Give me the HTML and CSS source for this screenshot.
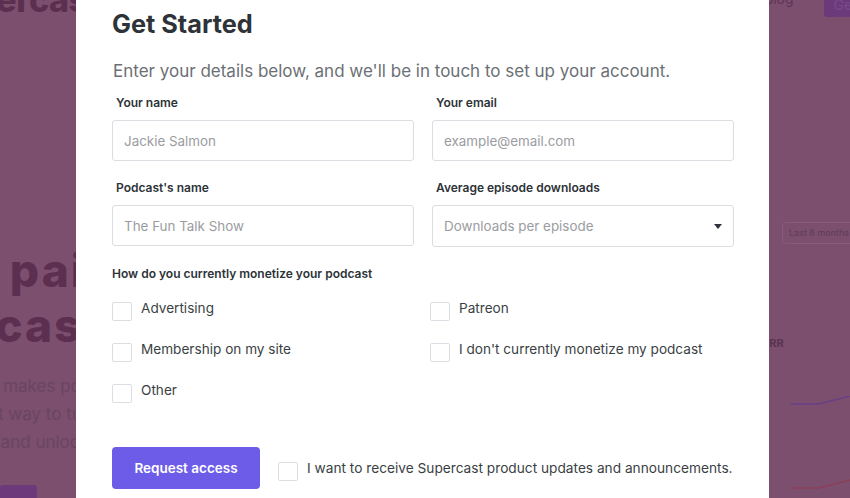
FILE: index.html
```html
<!DOCTYPE html>
<html>
<head>
<meta charset="utf-8">
<link rel="stylesheet" href="styles.css">
</head>
<body>
<div class="page">
  <aside class="bg-left">
    <div class="bg-logo">Supercast</div>
    <h2 class="bg-hero"><span class="h1">Get paid</span><span class="h2">podcasts</span></h2>
    <p class="bg-copy"><span class="c1">Supercast makes pods</span><span class="c2">the easiest way to turn</span><span class="c3">listeners and unlock</span></p>
    <div class="bg-btn"></div>
  </aside>
  <main class="modal">
    <h1 class="title">Get Started</h1>
    <p class="intro">Enter your details below, and we'll be in touch to set up your account.</p>
    <div class="grid">
      <div class="field">
        <label class="label">Your name</label>
        <div class="input">Jackie Salmon</div>
      </div>
      <div class="field">
        <label class="label">Your email</label>
        <div class="input">example@email.com</div>
      </div>
      <div class="field">
        <label class="label">Podcast's name</label>
        <div class="input">The Fun Talk Show</div>
      </div>
      <div class="field">
        <label class="label">Average episode downloads</label>
        <div class="input select">Downloads per episode<span class="caret"></span></div>
      </div>
    </div>
    <div class="label q">How do you currently monetize your podcast</div>
    <div class="checks">
      <div class="check"><span class="box"></span>Advertising</div>
      <div class="check"><span class="box"></span>Patreon</div>
      <div class="check"><span class="box"></span>Membership on my site</div>
      <div class="check"><span class="box"></span>I don't currently monetize my podcast</div>
      <div class="check"><span class="box"></span>Other</div>
    </div>
    <div class="actions">
      <button class="btn">Request access</button>
      <div class="check"><span class="box"></span>I want to receive Supercast product updates and announcements.</div>
    </div>
  </main>
  <aside class="bg-right">
    <div class="bg-nav"><span class="bg-blog">Blog</span><span class="bg-nbtn">Get</span></div>
    <div class="bg-pill">Last 6 months</div>
    <div class="bg-rr">MRR</div>
    <svg class="bg-chart" width="81" height="100" viewBox="0 0 81 100">
      <path d="M22 8 L50 8 L81 0" fill="none" stroke="#6a3f86" stroke-width="1.5"/>
      <path d="M22 92 L50 92 L81 84" fill="none" stroke="#8a4058" stroke-width="1.5"/>
    </svg>
  </aside>
</div>
</body>
</html>
```
FILE: styles.css
```css
* { box-sizing: border-box; }
html, body { margin: 0; padding: 0; }
body {
  width: 850px;
  height: 498px;
  overflow: hidden;
  background: #7b4f6d;
  font-family: "Inter", "Liberation Sans", sans-serif;
}
.page {
  display: flex;
  height: 498px;
}
.bg-left {
  width: 76px;
  flex: none;
  overflow: hidden;
  color: #5c2f51;
  display: flex;
  flex-direction: column;
}
.bg-logo {
  font-size: 34px;
  line-height: 34px;
  font-weight: 800;
  margin-top: -17px;
  margin-left: -68px;
  letter-spacing: -0.5px;
  white-space: nowrap;
  flex: none;
}
.bg-hero {
  margin: 226px 0 0 0;
  font-size: 46px;
  font-weight: 800;
  line-height: 55px;
  white-space: nowrap;
  letter-spacing: 2px;
  display: flex;
  flex-direction: column;
  flex: none;
}
.h1 { margin-left: -88px; }
.h2 { margin-left: -98px; }
.bg-copy {
  margin: 19px 0 0 0;
  font-size: 17px;
  line-height: 28px;
  color: #6a4563;
  white-space: nowrap;
  display: flex;
  flex-direction: column;
  flex: none;
}
.c1 { margin-left: -83px; }
.c2 { margin-left: -84px; }
.c3 { margin-left: -72px; }
.bg-btn {
  width: 37px;
  height: 20px;
  background: #6c3a7a;
  border-radius: 3px;
  margin-top: 29px;
  flex: none;
}
.modal {
  width: 693px;
  flex: none;
  background: #ffffff;
  padding: 6px 36px 0 36px;
}
.title {
  margin: 0;
  font-size: 25.3px;
  line-height: 36px;
  font-weight: 700;
  color: #2d3338;
}
.intro {
  margin: 18px 0 0 1px;
  font-size: 17px;
  line-height: 22px;
  color: #6b7075;
}
.grid {
  display: grid;
  grid-template-columns: 302px 302px;
  column-gap: 18px;
  row-gap: 19px;
  margin-top: 13px;
}
.field { display: flex; flex-direction: column; }
.label {
  font-size: 12px;
  font-weight: 600;
  color: #2d3338;
  line-height: 16px;
  padding-left: 4px;
  margin-bottom: 9px;
}
.input {
  height: 41px;
  border: 1px solid #dcdde2;
  border-radius: 3px;
  padding-left: 11px;
  display: flex;
  align-items: center;
  font-size: 13.4px;
  color: #9a9ca1;
}
.select { justify-content: space-between; padding-right: 11px; height: 42px; }
.caret {
  width: 0; height: 0;
  border-left: 4.5px solid transparent;
  border-right: 4.5px solid transparent;
  border-top: 5px solid #2d3338;
}
.q { margin-top: 19px; margin-bottom: 0; padding-left: 0; }
.checks {
  display: grid;
  grid-template-columns: 318px 300px;
  row-gap: 19px;
  margin-top: 17px;
}
.check {
  display: flex;
  align-items: flex-start;
  font-size: 13.6px;
  color: #3a3f44;
  line-height: 18px;
  white-space: nowrap;
}
.box {
  width: 20px;
  height: 19px;
  border: 1px solid #dcdde2;
  border-radius: 2px;
  margin-right: 9px;
  margin-top: 3px;
  flex: none;
}
.actions {
  display: flex;
  align-items: center;
  margin-top: 44px;
}
.btn {
  width: 148px;
  height: 42px;
  border: none;
  background: #6c5ce7;
  color: #ffffff;
  border-radius: 4px;
  font-family: inherit;
  font-size: 13.5px;
  font-weight: 600;
  margin-right: 18px;
  flex: none;
}
.actions .check { align-items: center; font-size: 13.7px; }
.actions .box { margin-top: 6px; }
.bg-right {
  width: 81px;
  flex: none;
  overflow: hidden;
  color: #5c2f51;
}
.bg-nav {
  display: flex;
  gap: 30px;
  margin-top: -10px;
  margin-left: -5px;
  font-size: 14px;
  color: #5f3557;
}
.bg-nbtn {
  background: #6c3a7a;
  border-radius: 3px;
  padding: 6px 10px 4px;
  color: #774c88;
}
.bg-pill {
  margin: 205px 0 0 13px;
  height: 22px;
  border: 1px solid #855c79;
  border-radius: 4px;
  padding-left: 6px;
  font-size: 9px;
  line-height: 20px;
  color: #5f3c5a;
  white-space: nowrap;
  width: 90px;
}
.bg-rr {
  margin: 92px 0 0 -10px;
  font-size: 11px;
  font-weight: 700;
  color: #5a3353;
}
.bg-chart { display: block; margin-top: 46px; }
```
